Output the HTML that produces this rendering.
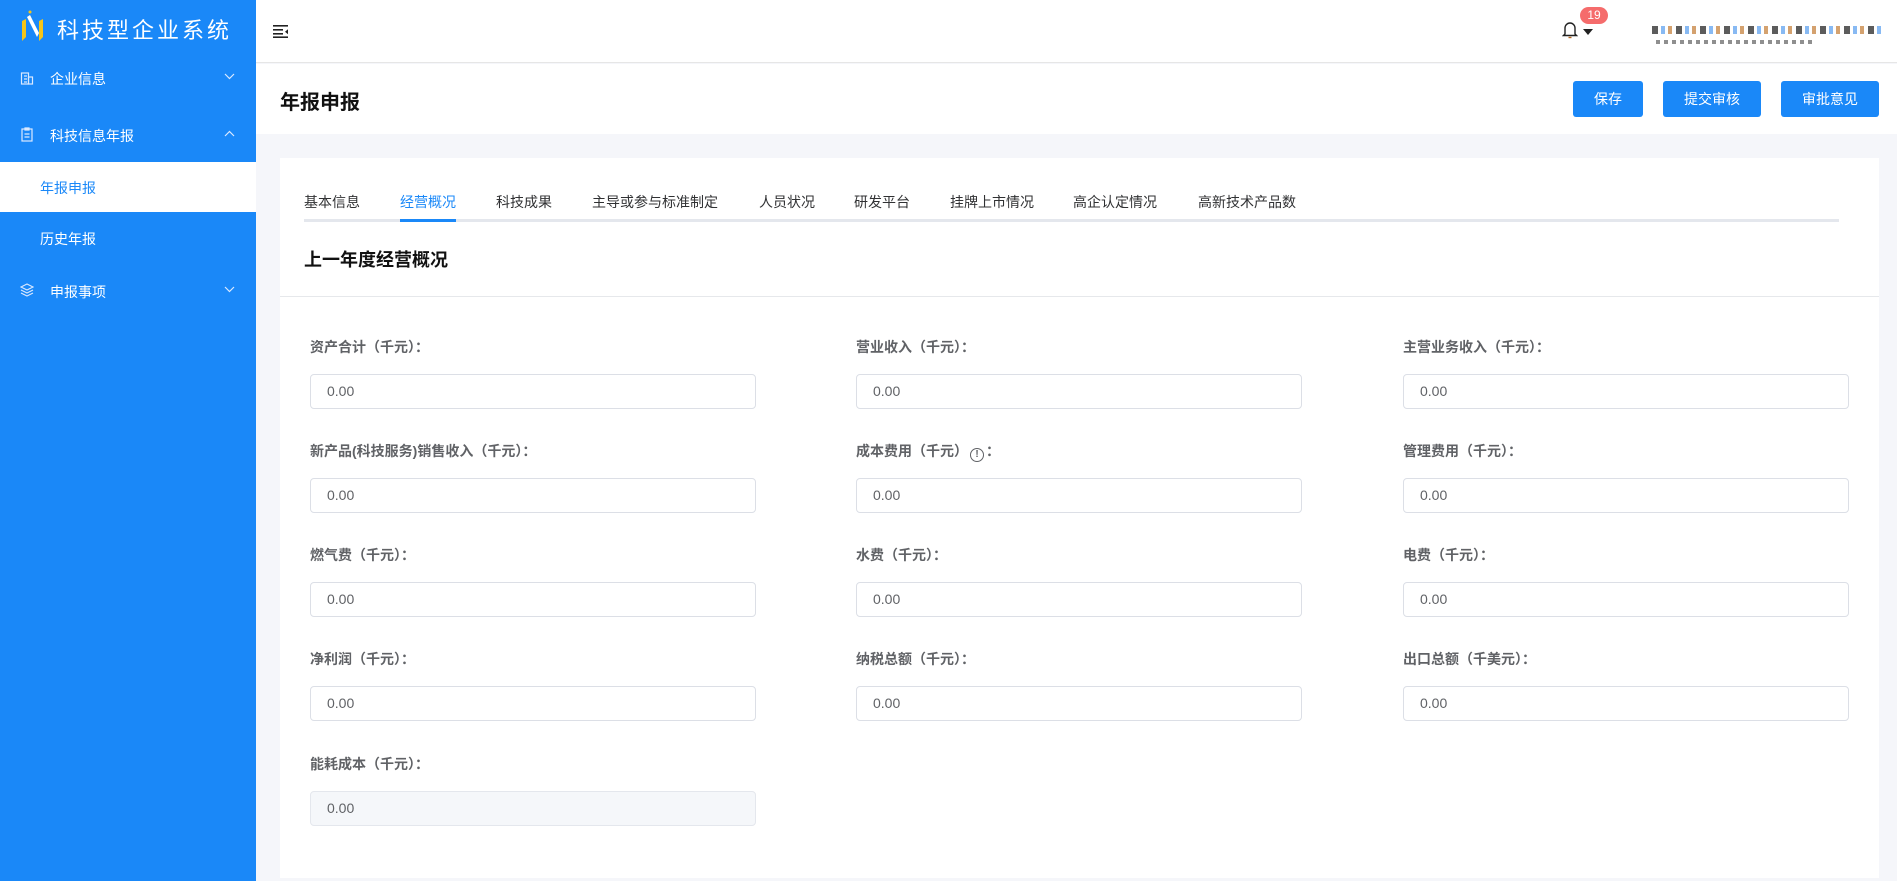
<!DOCTYPE html>
<html><head><meta charset="utf-8"><style>
*{box-sizing:border-box;margin:0;padding:0}
body{width:1897px;height:881px;overflow:hidden;font-family:"Liberation Sans","Noto Sans CJK SC",sans-serif;background:#f5f6fa;position:relative}
.a{position:absolute}
.side{left:0;top:0;width:256px;height:881px;background:#1a88f8;color:#fff}
.mi{position:absolute;left:0;width:256px;font-size:14px;color:#fff}
.hdr{left:256px;top:0;width:1641px;height:63px;background:#fff;border-bottom:1px solid #e6e6e6}
.tb{left:256px;top:64px;width:1641px;height:70px;background:#fff}
.btn{position:absolute;top:81px;height:36px;background:#1a88f8;color:#fff;border-radius:3px;font-size:14px;text-align:center;line-height:36px}
.card{left:280px;top:158px;width:1599px;height:720px;background:#fff}
.tab{position:absolute;top:192px;font-size:14px;color:#303133}
.lbl{position:absolute;font-size:14px;font-weight:bold;color:#606266}
.inp{position:absolute;width:446px;height:35px;border:1px solid #dcdfe6;border-radius:4px;font-size:14px;color:#606266;padding-left:16px;line-height:33px;background:#fff}
</style></head><body>
<div class="a side">
  <svg class="a" style="left:19px;top:9px" width="28" height="34" viewBox="0 0 28 34"><path d="M3 12 L3 32 L7 28 L7 10 Z" fill="#f5c518"/><path d="M8 8 L18 28 L20 24 L11 6 Z" fill="#fff"/><path d="M20 12 L20 32 L24 28 L24 10 Z" fill="#f5c518"/><circle cx="11" cy="3" r="1.5" fill="#f5c518"/></svg>
  <div class="a" style="left:57px;top:13px;font-size:22px;letter-spacing:3px;color:#fff">科技型企业系统</div>
  <div class="mi" style="top:68px;height:22px">
    <svg class="a" style="left:20px;top:3px" width="14" height="14" viewBox="0 0 14 14" fill="none" stroke="#dbe9ff" stroke-width="1.2"><rect x="1.5" y="2" width="7" height="11"/><rect x="8.5" y="6" width="4" height="7"/><path d="M4 5h3M4 8h3M4 11h3"/></svg>
    <span class="a" style="left:50px;top:1px">企业信息</span>
    <svg class="a" style="left:224px;top:5px" width="11" height="7" viewBox="0 0 11 7" fill="none" stroke="#dbe9ff" stroke-width="1.2"><path d="M1 1l4.5 4.5L10 1"/></svg>
  </div>
  <div class="mi" style="top:125px;height:22px">
    <svg class="a" style="left:21px;top:2px" width="12" height="15" viewBox="0 0 12 15" fill="none" stroke="#dbe9ff" stroke-width="1.2"><rect x="1" y="2" width="10" height="12"/><path d="M4 1h4v2H4zM3.5 7h5M3.5 10h5"/></svg>
    <span class="a" style="left:50px;top:1px">科技信息年报</span>
    <svg class="a" style="left:224px;top:5px" width="11" height="7" viewBox="0 0 11 7" fill="none" stroke="#dbe9ff" stroke-width="1.2"><path d="M1 6l4.5-4.5L10 6"/></svg>
  </div>
  <div class="a" style="left:0;top:162px;width:256px;height:50px;background:#fff"></div>
  <div class="a" style="left:40px;top:178px;font-size:14px;color:#1a88f8">年报申报</div>
  <div class="a" style="left:40px;top:229px;font-size:14px;color:#fff">历史年报</div>
  <div class="mi" style="top:281px;height:22px">
    <svg class="a" style="left:20px;top:2px" width="14" height="14" viewBox="0 0 14 14" fill="none" stroke="#dbe9ff" stroke-width="1.1"><path d="M7 1L13 4 7 7 1 4Z"/><path d="M1 7l6 3 6-3M1 10l6 3 6-3"/></svg>
    <span class="a" style="left:50px;top:1px">申报事项</span>
    <svg class="a" style="left:224px;top:5px" width="11" height="7" viewBox="0 0 11 7" fill="none" stroke="#dbe9ff" stroke-width="1.2"><path d="M1 1l4.5 4.5L10 1"/></svg>
  </div>
</div>
<div class="a hdr">
  <svg class="a" style="left:17px;top:25px" width="16" height="13" viewBox="0 0 16 13" fill="#222"><rect x="0" y="0" width="15" height="1.6"/><rect x="0" y="4" width="10" height="1.6"/><rect x="0" y="8" width="10" height="1.6"/><rect x="0" y="11.4" width="15" height="1.6"/><path d="M15 4.3v5l-3-2.5z"/></svg>
  <svg class="a" style="left:1306px;top:21px" width="16" height="18" viewBox="0 0 16 18" fill="none" stroke="#222" stroke-width="1.4"><path d="M3 13V7a5 5 0 0 1 10 0v6l1.5 1.5h-13z"/><path d="M6.5 16.5h3" stroke="#b5651d"/></svg>
  <svg class="a" style="left:1327px;top:29px" width="10" height="7" viewBox="0 0 10 7"><path d="M0 0h10L5 6z" fill="#222"/></svg>
  <div class="a" style="left:1324px;top:7px;width:28px;height:17px;border-radius:9px;background:#f56c6c;color:#fff;font-size:12px;text-align:center;line-height:17px">19</div>
  <div class="a" style="left:1396px;top:26px;width:230px;height:8px;background:repeating-linear-gradient(90deg,#333 0 6px,#fff 6px 9px,#6aa8f0 9px 13px,#fff 13px 16px,#c98a4b 16px 20px,#fff 20px 24px);opacity:.8"></div>
  <div class="a" style="left:1400px;top:40px;width:160px;height:4px;background:repeating-linear-gradient(90deg,#444 0 4px,#fff 4px 8px);opacity:.6"></div>
</div>
<div class="a tb"></div>
<div class="a" style="left:280px;top:86px;font-size:20px;font-weight:bold;color:#111">年报申报</div>
<div class="btn" style="left:1573px;width:70px">保存</div>
<div class="btn" style="left:1663px;width:98px">提交审核</div>
<div class="btn" style="left:1781px;width:98px">审批意见</div>
<div class="a card"></div>
<div class="a" style="left:304px;top:219px;width:1535px;height:3px;background:#e4e7ed"></div>
<div class="a" style="left:400px;top:219px;width:56px;height:3px;background:#1a88f8"></div>
<div class="tab" style="left:304px">基本信息</div>
<div class="tab" style="left:400px;color:#1a88f8">经营概况</div>
<div class="tab" style="left:496px">科技成果</div>
<div class="tab" style="left:592px">主导或参与标准制定</div>
<div class="tab" style="left:759px">人员状况</div>
<div class="tab" style="left:854px">研发平台</div>
<div class="tab" style="left:950px">挂牌上市情况</div>
<div class="tab" style="left:1073px">高企认定情况</div>
<div class="tab" style="left:1198px">高新技术产品数</div>
<div class="a" style="left:304px;top:246px;font-size:18px;font-weight:bold;color:#111">上一年度经营概况</div>
<div class="a" style="left:280px;top:296px;width:1599px;height:1px;background:#e6e8eb"></div>

<div class="lbl" style="left:310px;top:337px">资产合计（千元）：</div>
<div class="lbl" style="left:856px;top:337px">营业收入（千元）：</div>
<div class="lbl" style="left:1403px;top:337px">主营业务收入（千元）：</div>
<div class="inp" style="left:310px;top:374px">0.00</div>
<div class="inp" style="left:856px;top:374px">0.00</div>
<div class="inp" style="left:1403px;top:374px">0.00</div>

<div class="lbl" style="left:310px;top:441px">新产品(科技服务)销售收入（千元）：</div>
<div class="lbl" style="left:856px;top:441px">成本费用（千元）<span style="display:inline-block;width:14px;height:14px;border:1.3px solid #606266;border-radius:50%;font-size:10px;text-align:center;line-height:12px;vertical-align:-1px;margin:0 2px">!</span>：</div>
<div class="lbl" style="left:1403px;top:441px">管理费用（千元）：</div>
<div class="inp" style="left:310px;top:478px">0.00</div>
<div class="inp" style="left:856px;top:478px">0.00</div>
<div class="inp" style="left:1403px;top:478px">0.00</div>

<div class="lbl" style="left:310px;top:545px">燃气费（千元）：</div>
<div class="lbl" style="left:856px;top:545px">水费（千元）：</div>
<div class="lbl" style="left:1403px;top:545px">电费（千元）：</div>
<div class="inp" style="left:310px;top:582px">0.00</div>
<div class="inp" style="left:856px;top:582px">0.00</div>
<div class="inp" style="left:1403px;top:582px">0.00</div>

<div class="lbl" style="left:310px;top:649px">净利润（千元）：</div>
<div class="lbl" style="left:856px;top:649px">纳税总额（千元）：</div>
<div class="lbl" style="left:1403px;top:649px">出口总额（千美元）：</div>
<div class="inp" style="left:310px;top:686px">0.00</div>
<div class="inp" style="left:856px;top:686px">0.00</div>
<div class="inp" style="left:1403px;top:686px">0.00</div>

<div class="lbl" style="left:310px;top:754px">能耗成本（千元）：</div>
<div class="inp" style="left:310px;top:791px;background:#f5f7fa;border-color:#e4e7ed">0.00</div>
</body></html>
